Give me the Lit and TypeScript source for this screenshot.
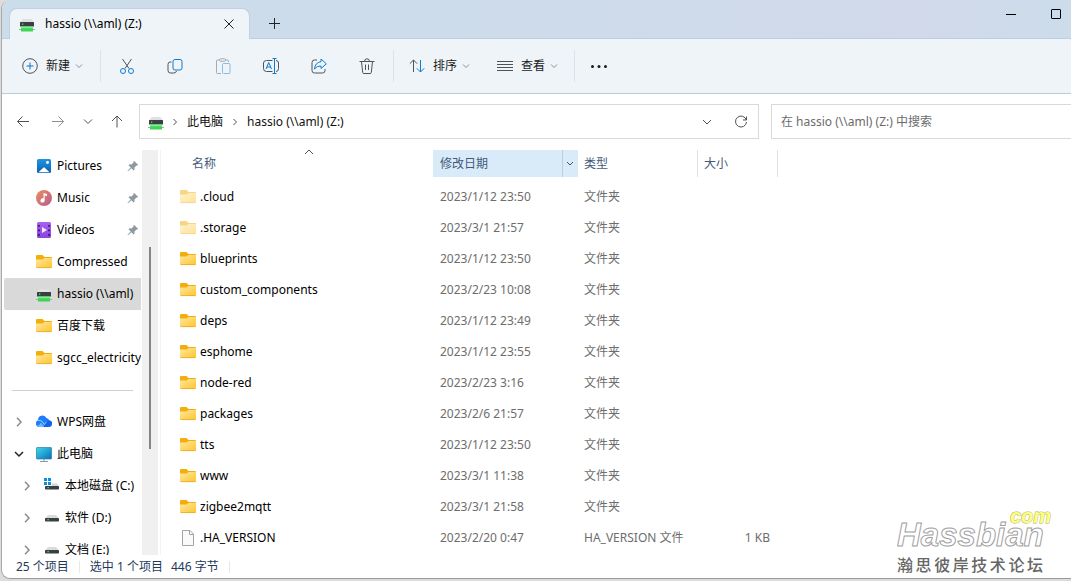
import { LitElement, html, svg, css, nothing, TemplateResult } from "lit";
import { customElement } from "lit/decorators.js";

const icons: Record<string, TemplateResult> = {
  drive: html`<svg width="16" height="16" viewBox="0 0 16 16">
    <path d="M3.500 3h9l2.500 3.500H1z" fill="#dfe1e3" /><rect x="1" y="6" width="14" height="4.500" rx=".5" fill="#3b3f42" />
    <rect x="3" y="7.500" width="1.300" height="1.300" fill="#4be36a" /><path d="M0 13.500h16" stroke="#a9acaf" />
    <rect x="2" y="10.500" width="12" height="5" rx=".5" fill="#3fd455" /><path d="M2 11.500h12" stroke="#7df08c" stroke-width="1.500" /></svg>`,
  pictures: html`<svg width="16" height="16" viewBox="0 0 16 16"><defs><linearGradient id="p" x2="0" y2="1"><stop stop-color="#1f95dd" /><stop offset="1" stop-color="#0b61b4" /></linearGradient></defs>
    <rect x="1" y="1" width="14" height="14" rx="1.500" fill="url(#p)" /><path d="M2.500 14.300l4.800-4.600q.7-.7 1.400 0l4.800 4.600z" fill="#fff" /><circle cx="11.500" cy="4.500" r="1.400" fill="#fff" /></svg>`,
  music: html`<svg width="16" height="16" viewBox="0 0 16 16"><defs><linearGradient id="m" x2="1" y2="1"><stop stop-color="#ec8f57" /><stop offset="1" stop-color="#b85a93" /></linearGradient></defs>
    <circle cx="8" cy="8" r="8" fill="url(#m)" /><path d="M7.500 3l3.500 1v2l-2.300-.6v5.100a2.100 2.100 0 1 1-1.200-1.900z" fill="#fff" /></svg>`,
  videos: html`<svg width="16" height="16" viewBox="0 0 16 16"><defs><linearGradient id="v" x2="0" y2="1"><stop stop-color="#ab5ff2" /><stop offset="1" stop-color="#8a45dc" /></linearGradient></defs>
    <rect x="1" y="0" width="14" height="16" rx="1.500" fill="url(#v)" /><path d="M3 3v11M13 3v11" stroke="#3d1470" stroke-width="1.800" stroke-dasharray="1.800 2.700" /><path d="M6 5v6l5-3z" fill="#f3e9ff" /></svg>`,
  folder: html`<svg width="16" height="16" viewBox="0 0 16 16"><defs><linearGradient id="f" x2="1" y2="1"><stop stop-color="#ffe7a0" /><stop offset="1" stop-color="#fdc62f" /></linearGradient></defs>
    <path d="M0 2Q0 1 1 1h5.500L8.500 3H15q1 0 1 1v4H0z" fill="#f3ad0c" /><path d="M0 5.500h6.500l2-1.500H16v9q0 1-1 1H1q-1 0-1-1z" fill="url(#f)" /><path d="M.7 13.600h14.600" stroke="#eaa721" stroke-width=".8" /></svg>`,
  file: html`<svg width="16" height="16" viewBox="0 0 16 16"><path d="M2.500.5h7.500l3.500 3.500v11.500h-11z" fill="#fafafa" stroke="#a4a4a4" /><path d="M9.500.5v4h4" fill="none" stroke="#a4a4a4" /></svg>`,
  cloud: html`<svg width="16" height="16" viewBox="0 0 16 16"><path d="M3.500 13A3.500 3.500 0 0 1 2 6.300 4.500 4.500 0 0 1 10.500 4q4 1 2 5l-5 4z" fill="#1e7dfa" /><path d="M6 13l4.500-5.200A3 3 0 0 1 16 10q0 3-3.500 3z" fill="#1262e8" /><path d="M2 6.300Q6 5.500 8 10M7.500 11.500l3-3.700" fill="none" stroke="#8fd0ff" /><path d="M1 12q3-1 4-3.500L8 13H3z" fill="#6db8ff" /></svg>`,
  pc: html`<svg width="16" height="16" viewBox="0 0 16 16"><defs><linearGradient id="c" x2="1" y2="1"><stop stop-color="#3bdce6" /><stop offset="1" stop-color="#0c6bc0" /></linearGradient></defs>
    <rect x=".5" y="1.500" width="15" height="11.500" rx=".6" fill="url(#c)" stroke="#2a7da8" stroke-width=".7" /><path d="M8 13v2.500M4 15.500h8" stroke="#8c979f" /></svg>`,
  sysdisk: html`<svg width="16" height="16" viewBox="0 0 16 16"><path d="M0 0h3v3H0zM4 0h3v3H4zM0 4h3v3H0zM4 4h3v3H4z" fill="#0a8fe6" /><path d="M8 5.500h5L15 8.500H1V7.800h7z" fill="#d5d7d9" /><rect x="1" y="8" width="14" height="3.500" rx=".8" fill="#3b3f42" /><rect x="3.500" y="9" width="1.300" height="1.300" fill="#4be36a" /></svg>`,
  disk: html`<svg width="16" height="16" viewBox="0 0 16 16"><path d="M4 5h8l3 3.500H1z" fill="#d9dbdd" /><rect x="1" y="8" width="14" height="3.500" rx=".8" fill="#3b3f42" /><rect x="3.500" y="9" width="1.300" height="1.300" fill="#4be36a" /></svg>`,
};

const stroke = (size: number, body: unknown, cls = "") =>
  html`<svg class="line ${cls}" width=${size} height=${size} viewBox="0 0 ${size} ${size}">${body}</svg>`;

const chevDown = (cls = "") => stroke(10, svg`<path d="M2 3.500l3 3 3-3" />`, cls);
const chevRight = (cls = "") => stroke(10, svg`<path d="M3 .8l4 4.200-4 4.200" />`, cls);
const crumbArrow = () => stroke(8, svg`<path d="M2.500 1l3 3-3 3" />`, "crumb");

const tool = {
  add: stroke(16, svg`<circle cx="8" cy="8" r="7.300" /><path class="blue" d="M8 4.500v7M4.500 8h7" />`),
  cut: stroke(16, svg`<path d="M3.500 1l6.500 9.500M12.500 1L6 10.500" /><circle class="blue" cx="4" cy="13" r="2.500" /><circle class="blue" cx="12" cy="13" r="2.500" />`),
  copy: stroke(16, svg`<path d="M4.500 4H3Q1 4 1 6.500v6Q1 15 3.500 15H7q2 0 2.500-2" /><rect class="blue" x="6" y="1.500" width="9" height="10.500" rx="2" />`),
  paste: stroke(16, svg`<path d="M4.500 2H2.500Q1.500 2 1.500 3v11.500q0 1 1 1H6M10.500 2h2q1 0 1 1v1" /><rect x="4.500" y=".8" width="6" height="2.500" rx="1.200" /><rect class="blue" x="7.500" y="5.500" width="7.500" height="10" rx="1" />`, "faded"),
  rename: stroke(18, svg`<path d="M10.500 3.500H4.500Q1.500 3.500 1.500 6v5.500Q1.500 14.500 4.500 14.500h6M14 3.500q2.500 0 2.500 2.500v5.500q0 3-2.500 3" /><path class="blue" d="M12.500 1v16M10.500 1.500h4M10.500 16.500h4M4 12l2.700-6.500L9.500 12M5 10h3.800" />`),
  share: stroke(16, svg`<path d="M6 2H3.500Q1 2 1 4.500v8Q1 15 3.500 15h8q2.500 0 2.500-2.500V11" /><path class="blue" d="M10 1l5.300 4.800L10 10.500V8Q6 7.500 3.500 11 4 4.500 10 3.700z" />`),
  trash: stroke(16, svg`<path d="M.5 3.500h15M5.500 3.500q0-2.700 2.500-2.700t2.500 2.700M2.500 3.500l1.200 11q.1 1 1.100 1h6.400q1 0 1.100-1l1.200-11M6.500 6.500v5.500M9.500 6.500v5.500" />`),
  sort: stroke(16, svg`<path d="M4.500 14V2M.8 5.700L4.500 2l3.700 3.700" /><path class="blue" d="M11.500 2v12M7.800 10.300l3.700 3.700 3.700-3.700" />`),
  view: stroke(16, svg`<path d="M0 3.500h16M0 6.500h16M0 9.500h16M0 12.500h16" />`),
  more: html`<svg width="18" height="18" viewBox="0 0 18 18" fill="#1c1c1c"><circle cx="2.500" cy="9.500" r="1.500" /><circle cx="9" cy="9.500" r="1.500" /><circle cx="15.500" cy="9.500" r="1.500" /></svg>`,
  pin: html`<svg width="12" height="12" viewBox="0 0 12 12"><path d="M7 .8l4.200 4.200-1 .6-.7-.1-2 2 .1 2-1 1L4.300 8.200 1 11.300l-.5-.5L3.700 7.500 1.500 5.300l1-1 2 .1 2-2-.1-.7z" fill="#8d99a3" /></svg>`,
};

const base = css`
  :host { display: block; box-sizing: border-box; }
  * { box-sizing: border-box; }
  button { font: inherit; color: inherit; background: none; border: 0; padding: 0; margin: 0; display: flex; align-items: center; justify-content: center; }
  a { color: inherit; text-decoration: none; }
  svg { flex: none; display: block; }
  .line { fill: none; stroke: #505356; stroke-width: 1; }
  .blue { stroke: #0d7bd0; }
  .faded { opacity: 0.45; }
  .dim { stroke: #8e9296; }
`;

@customElement("title-bar")
class TitleBar extends LitElement {
  static styles = [base, css`
    .bar { display: flex; height: 39px; padding: 8px 0 0 7px; overflow: hidden; box-shadow: inset 0 -1px #c0cde0;
      background: linear-gradient(90deg, #cbdcea, #cddcea 40%, #d1d9ea 86%, #ccdceb); }
    .tab { display: flex; align-items: center; width: 241px; height: 31px; padding: 0 15px 0 9px; gap: 10px;
      background: #eff4f9; border: 1px solid #c0cfe2; border-bottom: 0; border-radius: 8px 8px 0 0; color: #000; }
    .name { flex: 1; }
    .add { width: 49px; height: 31px; }
    .caption { display: flex; margin: -8px -8px 0 auto; height: 29px; }
    .caption button { width: 45px; }
    .dark { stroke: #222; }
    .black { stroke: #000; }
  `];
  render() {
    return html`<header class="bar">
      <div class="tab">${icons.drive}<span class="name">hassio (\\\\aml) (Z:)</span>
        <button aria-label="关闭标签页">${stroke(10, svg`<path d="M.5 .5l9 9M9.500 .5l-9 9" />`, "dark")}</button></div>
      <button class="add" aria-label="新标签页">${stroke(11, svg`<path d="M5.500 0v11M0 5.500h11" />`, "dark")}</button>
      <div class="caption">
        <button aria-label="最小化">${stroke(11, svg`<path d="M0 5.500h10" />`, "black")}</button>
        <button aria-label="最大化">${stroke(11, svg`<rect x=".5" y=".5" width="9" height="9" rx=".5" />`, "black")}</button>
      </div>
    </header>`;
  }
}

@customElement("command-bar")
class CommandBar extends LitElement {
  static styles = [base, css`
    .bar { display: flex; align-items: center; height: 55px; padding-left: 8px; background: #eff4f9; border-bottom: 1px solid #bfcad8; color: #1a1a1a; }
    button { height: 32px; }
    .text { padding: 0 12px; gap: 4px; }
    .text span { margin-left: 4px; }
    .icon { width: 48px; }
    .rule { width: 1px; height: 32px; background: #dde2e8; }
    .icons { display: flex; padding: 0 2px; }
    .pair { display: flex; gap: 2px; padding: 0 3px; }
    .group { display: flex; padding-right: 4px; }
  `];
  render() {
    const labels: [string, TemplateResult][] = [["剪切", tool.cut], ["复制", tool.copy], ["粘贴", tool.paste], ["重命名", tool.rename], ["共享", tool.share], ["删除", tool.trash]];
    return html`<nav class="bar">
      <div class="group"><button class="text">${tool.add}<span>新建</span>${chevDown("dim")}</button></div>
      <div class="rule"></div>
      <div class="icons">${labels.map(([l, i]) => html`<button class="icon" aria-label=${l}>${i}</button>`)}</div>
      <div class="rule"></div>
      <div class="pair"><button class="text">${tool.sort}<span>排序</span>${chevDown("dim")}</button>
        <button class="text">${tool.view}<span>查看</span>${chevDown("dim")}</button></div>
      <div class="rule"></div>
      <button class="icon" aria-label="更多">${tool.more}</button>
    </nav>`;
  }
}

@customElement("address-row")
class AddressRow extends LitElement {
  static styles = [base, css`
    .row { display: flex; height: 56px; padding: 10px 0 11px 3px; }
    .history { display: flex; width: 134px; align-items: center; }
    .wide { width: 35px; height: 32px; }
    .slim { width: 26px; height: 32px; }
    .slim + .wide { width: 32px; }
    .box { flex: 1; display: flex; align-items: center; min-width: 0; border: 1px solid #d9d9d9; padding: 0 10px 0 8px; color: #111; }
    .crumbs { display: flex; align-items: center; flex: 1; gap: 7px; }
    .crumb { margin-right: 1px; }
    .crumbs a { padding-right: 1px; }
    .end { gap: 22px; display: flex; align-items: center; }
    .search { flex: 0 0 300px; margin-left: 12px; display: flex; border: 1px solid #d9d9d9; border-right: 0; }
    input { flex: 1; min-width: 0; font: inherit; border: 0; outline: 0; padding: 0 9px; background: transparent; }
    input::placeholder { color: #6b6b6b; opacity: 1; }
  `];
  render() {
    return html`<div class="row">
      <div class="history">
        <button class="wide" aria-label="后退">${stroke(14, svg`<path d="M13 6.500H1.500M6.500 1.500l-5 5 5 5" />`)}</button>
        <button class="wide" aria-label="前进">${stroke(14, svg`<path d="M1 6.500h11.500M7.500 1.500l5 5-5 5" />`, "dim")}</button>
        <button class="slim" aria-label="最近位置">${stroke(10, svg`<path d="M1 2.500l4 4 4-4" />`)}</button>
        <button class="wide" aria-label="向上">${stroke(14, svg`<path d="M7 12.500V1M2 6l5-5 5 5" />`)}</button>
      </div>
      <div class="box">
        <div class="crumbs">${icons.drive}${crumbArrow()}<a href="#">此电脑</a>${crumbArrow()}<a href="#">hassio (\\\\aml) (Z:)</a></div>
        <div class="end"><button aria-label="历史记录">${stroke(10, svg`<path d="M1 3l4 4 4-4" />`)}</button>
          <button aria-label="刷新">${stroke(14, svg`<path d="M12.300 5A5.500 5.500 0 1 0 12.500 7M12.500 1.500V5H9" />`)}</button></div>
      </div>
      <label class="search"><input type="text" aria-label="搜索" placeholder="在 hassio (\\\\aml) (Z:) 中搜索" /></label>
    </div>`;
  }
}

interface TreeNode { icon: string; name: string; pin?: boolean; selected?: boolean; arrow?: "right" | "down"; deep?: boolean; }

@customElement("side-tree")
class SideTree extends LitElement {
  static styles = [base, css`
    :host { display: flex; min-height: 0; }
    .list { width: 139px; padding-left: 2px; overflow: hidden; color: #000; }
    .item { display: flex; align-items: center; height: 32px; gap: 5px; padding-right: 2px; white-space: nowrap; }
    .selected { background: #d9d9d9; border-radius: 2px 0 0 2px; }
    .arrow { display: flex; justify-content: center; width: 27px; padding-left: 2px; flex: none; }
    .deep .arrow { width: 35px; padding-left: 10px; }
    .name { flex: 1; }
    .down { stroke: #222; stroke-width: 1.500; }
    .soft { stroke: #8a8a8a; stroke-width: 1.500; }
    .gap { height: 32px; padding: 16px 8px 0 8px; }
    .gap hr { margin: 0; border: 0; border-top: 1px solid #d0d0d0; }
    .track { width: 16px; margin-left: 1px; background: #f0f0f0; padding: 97px 0 0 7px; }
    .thumb { width: 2px; height: 202px; background: #858585; }
  `];
  top: TreeNode[] = [
    { icon: "pictures", name: "Pictures", pin: true }, { icon: "music", name: "Music", pin: true }, { icon: "videos", name: "Videos", pin: true },
    { icon: "folder", name: "Compressed" }, { icon: "drive", name: "hassio (\\\\aml)", selected: true },
    { icon: "folder", name: "百度下载" }, { icon: "folder", name: "sgcc_electricity" },
  ];
  bottom: TreeNode[] = [
    { icon: "cloud", name: "WPS网盘", arrow: "right" }, { icon: "pc", name: "此电脑", arrow: "down" },
    { icon: "sysdisk", name: "本地磁盘 (C:)", arrow: "right", deep: true }, { icon: "disk", name: "软件 (D:)", arrow: "right", deep: true }, { icon: "disk", name: "文档 (E:)", arrow: "right", deep: true },
  ];
  item(n: TreeNode) {
    return html`<a href="#" class="item ${n.selected ? "selected" : ""} ${n.deep ? "deep" : ""}">
      <span class="arrow">${n.arrow === "down" ? stroke(10, svg`<path d="M1 3l4 4 4-4" />`, "down") : n.arrow ? chevRight("soft") : nothing}</span>
      ${icons[n.icon]}<span class="name">${n.name}</span>${n.pin ? tool.pin : nothing}</a>`;
  }
  render() {
    return html`<nav class="list">${this.top.map((n) => this.item(n))}<div class="gap"><hr /></div>${this.bottom.map((n) => this.item(n))}</nav>
      <div class="track"><div class="thumb"></div></div>`;
  }
}

@customElement("file-list")
class FileList extends LitElement {
  static styles = [base, css`
    :host { overflow: hidden; }
    table { border-collapse: collapse; table-layout: fixed; width: 617px; }
    .c-date { width: 145px; }
    .c-type { width: 120px; }
    .c-size { width: 80px; }
    th { height: 27px; padding: 0; font-weight: 400; text-align: left; color: #44597a; }
    .head { display: flex; align-items: center; height: 27px; padding-left: 6px; border-right: 1px solid #e2e2e2; }
    .first { position: relative; padding-left: 31px; border-right-color: transparent; }
    .sort { position: absolute; top: -3px; left: 143px; }
    .active { background: #d9ebf9; border-right: 0; padding-left: 7px; }
    .active span { flex: 1; }
    .drop { width: 16px; height: 27px; padding-right: 1px; border-left: 1px solid #b9cfe0; }
    .spacer td { height: 4px; }
    td { height: 31px; padding: 0 0 0 6px; color: #6d6d6d; white-space: nowrap; }
    .date { padding-left: 7px; }
    .size { text-align: right; padding-right: 8px; }
    .name { padding-left: 19px; color: #000; }
    .entry { display: flex; align-items: center; gap: 4px; }
    .hidden svg { opacity: 0.5; }
  `];
  rows: [string, string][] = [
    [".cloud", "2023/1/12 23:50"], [".storage", "2023/3/1 21:57"], ["blueprints", "2023/1/12 23:50"], ["custom_components", "2023/2/23 10:08"],
    ["deps", "2023/1/12 23:49"], ["esphome", "2023/1/12 23:55"], ["node-red", "2023/2/23 3:16"], ["packages", "2023/2/6 21:57"],
    ["tts", "2023/1/12 23:50"], ["www", "2023/3/1 11:38"], ["zigbee2mqtt", "2023/3/1 21:58"], [".HA_VERSION", "2023/2/20 0:47"],
  ];
  render() {
    return html`<table>
      <colgroup><col /><col class="c-date" /><col class="c-type" /><col class="c-size" /></colgroup>
      <thead><tr>
        <th><div class="head first">名称${stroke(10, svg`<path d="M1 7l4-4 4 4" />`, "sort")}</div></th>
        <th><div class="head active"><span>修改日期</span><button class="drop" aria-label="筛选">${stroke(10, svg`<path d="M2 3l3 3 3-3" />`)}</button></div></th>
        <th><div class="head">类型</div></th><th><div class="head">大小</div></th></tr></thead>
      <tbody><tr class="spacer" aria-hidden="true"><td colspan="4"></td></tr>
        ${this.rows.map(([name, date]) => {
          const file = name === ".HA_VERSION";
          return html`<tr><td class="name"><a href="#" class="entry ${!file && name[0] === "." ? "hidden" : ""}">${file ? icons.file : icons.folder}${name}</a></td>
            <td class="date">${date}</td><td>${file ? "HA_VERSION 文件" : "文件夹"}</td><td class="size">${file ? "1 KB" : nothing}</td></tr>`;
        })}</tbody></table>`;
  }
}

@customElement("app-root")
class AppRoot extends LitElement {
  static styles = [base, css`
    :host { height: 100vh; padding: 0 0 2px 1px; background: #dcdcdc; overflow: hidden; font: 12px/18px "Noto Sans", "Noto Sans CJK SC", sans-serif; }
    .window { position: relative; display: flex; flex-direction: column; height: 100%; background: #fff; overflow: hidden;
      border-left: 1px solid #a9a9a9; border-bottom: 1px solid #9a9a9a; border-radius: 9px 0 0 9px; }
    .main { flex: 1; display: flex; min-height: 0; }
    .files { flex: 1; min-width: 0; margin-left: 2px; border-left: 1px solid #f3f3f3; }
    .status { display: flex; align-items: center; height: 23px; padding-left: 14px; color: #1e395b; }
    .status span { padding-right: 10px; }
    .status .count, .status .bytes { border-right: 1px solid #e8e8e8; height: 12px; line-height: 12px; }
    .status .picked { padding: 0 8px 0 10px; }
    .mark { position: absolute; right: 20px; bottom: 2px; width: 154px; pointer-events: none; }
    .brand { font: italic bold 33px/34px "Liberation Sans", sans-serif; color: #fff; -webkit-text-stroke: 1px #a0a0a0; }
    .com { position: absolute; right: 0; top: -10px; font: italic bold 20px/16px "Liberation Sans", sans-serif; color: #ffff7c; -webkit-text-stroke: 1px #b4b478; paint-order: stroke; }
    .forum { width: 146px; font: 500 16px/24px "Noto Sans CJK SC", sans-serif; color: #666; text-align: justify; text-align-last: justify; }
  `];
  render() {
    return html`<div class="window">
      <title-bar></title-bar><command-bar></command-bar><address-row></address-row>
      <div class="main"><side-tree></side-tree><file-list class="files"></file-list></div>
      <footer class="status"><span class="count">25 个项目</span><span class="picked">选中 1 个项目</span><span class="bytes">446 字节</span></footer>
      <div class="mark"><div class="brand">Hassbian</div><div class="com">com</div><div class="forum">瀚思彼岸技术论坛</div></div>
    </div>`;
  }
}
